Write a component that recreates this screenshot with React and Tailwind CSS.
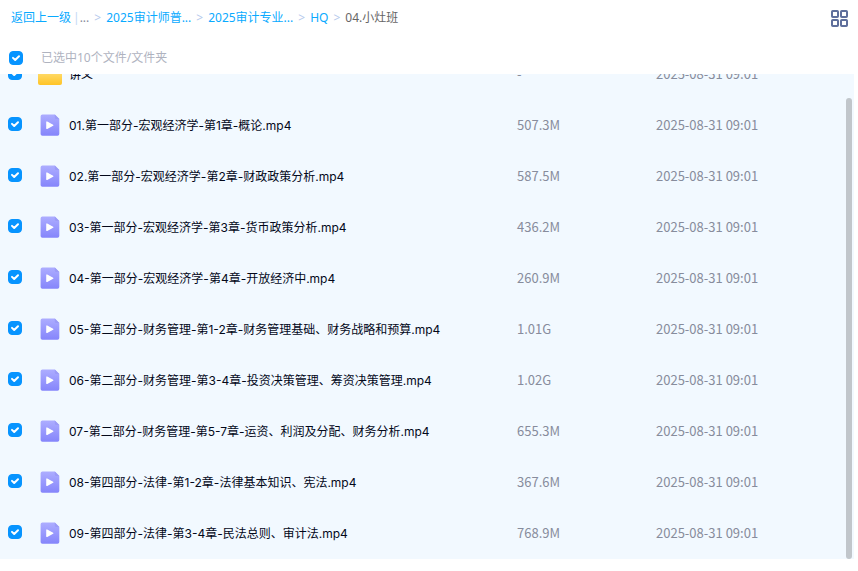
import React from 'react';

const crumbs = ['2025审计师普...', '2025审计专业...', 'HQ'];

const files = [
  { type: 'folder', name: '讲义', size: '-', date: '2025-08-31 09:01' },
  { type: 'video', name: '01.第一部分-宏观经济学-第1章-概论.mp4', size: '507.3M', date: '2025-08-31 09:01' },
  { type: 'video', name: '02.第一部分-宏观经济学-第2章-财政政策分析.mp4', size: '587.5M', date: '2025-08-31 09:01' },
  { type: 'video', name: '03-第一部分-宏观经济学-第3章-货币政策分析.mp4', size: '436.2M', date: '2025-08-31 09:01' },
  { type: 'video', name: '04-第一部分-宏观经济学-第4章-开放经济中.mp4', size: '260.9M', date: '2025-08-31 09:01' },
  { type: 'video', name: '05-第二部分-财务管理-第1-2章-财务管理基础、财务战略和预算.mp4', size: '1.01G', date: '2025-08-31 09:01' },
  { type: 'video', name: '06-第二部分-财务管理-第3-4章-投资决策管理、筹资决策管理.mp4', size: '1.02G', date: '2025-08-31 09:01' },
  { type: 'video', name: '07-第二部分-财务管理-第5-7章-运资、利润及分配、财务分析.mp4', size: '655.3M', date: '2025-08-31 09:01' },
  { type: 'video', name: '08-第四部分-法律-第1-2章-法律基本知识、宪法.mp4', size: '367.6M', date: '2025-08-31 09:01' },
  { type: 'video', name: '09-第四部分-法律-第3-4章-民法总则、审计法.mp4', size: '768.9M', date: '2025-08-31 09:01' },
];

const Checkbox = ({ id }) => (
  <span className="relative block size-3.5 shrink-0">
    <input
      id={id}
      type="checkbox"
      defaultChecked
      className="peer block size-3.5 appearance-none rounded-[4px] border border-[#c4d8f6] bg-white checked:border-[#0794ff] checked:bg-[#0794ff]"
    />
    <svg
      viewBox="0 0 14 14"
      className="pointer-events-none absolute inset-0 hidden size-3.5 peer-checked:block"
      fill="none"
      stroke="#fff"
      strokeWidth="2"
      strokeLinecap="round"
      strokeLinejoin="round"
    >
      <path d="M4 6.9l2.2 2.1L10 5.3" />
    </svg>
  </span>
);

const VideoIcon = () => (
  <svg width="24" height="24" viewBox="0 0 24 24" className="block">
    <defs>
      <linearGradient id="video-fill" x1="0" y1="0" x2="0" y2="1">
        <stop offset="0" stopColor="#adadff" />
        <stop offset="1" stopColor="#8585fb" />
      </linearGradient>
    </defs>
    <path
      d="M4.400 1.500h12.400l4.500 4.500v15a1.800 1.800 0 0 1-1.800 1.800H4.400a1.800 1.800 0 0 1-1.800-1.800V3.300a1.800 1.800 0 0 1 1.800-1.800z"
      fill="url(#video-fill)"
    />
    <path d="M16.800 1.500l4.500 4.500h-3a1.500 1.500 0 0 1-1.500-1.500z" fill="#9c9cf6" />
    <path d="M8.900 9v6.400l5.900-3.200z" fill="#fff" stroke="#fff" strokeWidth="1.300" strokeLinejoin="round" />
  </svg>
);

const FolderIcon = () => (
  <svg width="24" height="24" viewBox="0 0 24 24" className="block">
    <defs>
      <linearGradient id="folder-fill" x1="0" y1="0" x2="0" y2="1">
        <stop offset="0" stopColor="#ffe07a" />
        <stop offset="1" stopColor="#ffc427" />
      </linearGradient>
    </defs>
    <path d="M0 4a2 2 0 0 1 2-2h7l3 3h10a2 2 0 0 1 2 2v10H0z" fill="#ffb91f" />
    <path d="M0 8h24v13a2 2 0 0 1-2 2H2a2 2 0 0 1-2-2z" fill="url(#folder-fill)" />
  </svg>
);

const GridIcon = () => (
  <svg width="17" height="17" viewBox="0 0 17 17" fill="none" stroke="#5f6f9c" strokeWidth="2">
    <rect x="1" y="1" width="6" height="6" rx="0.800" />
    <rect x="10" y="1" width="6" height="6" rx="0.800" />
    <rect x="1" y="10" width="6" height="6" rx="0.800" />
    <rect x="10" y="10" width="6" height="6" rx="0.800" />
  </svg>
);

const Breadcrumb = () => (
  <nav className="flex min-w-0 items-center whitespace-nowrap text-[#09aaff]">
    <a href="#back">返回上一级</a>
    <span className="ml-0.5 text-[#c4d8f6]">|</span>
    <span className="text-[#878c9c]">...</span>
    {crumbs.map((crumb) => (
      <React.Fragment key={crumb}>
        <span className="mx-[5px] text-[#b5c9ec]">&gt;</span>
        <a href="#folder">{crumb}</a>
      </React.Fragment>
    ))}
    <span className="mx-[5px] text-[#b5c9ec]">&gt;</span>
    <span className="text-[#666]">04.小灶班</span>
  </nav>
);

const FileRow = ({ file, index }) => (
  <tr className="h-[51px] bg-[#f2f9ff]">
    <td className="pb-1 pl-2">
      <Checkbox id={`file-${index}`} />
    </td>
    <td className="pb-0.5">{file.type === 'folder' ? <FolderIcon /> : <VideoIcon />}</td>
    <td className="truncate pl-[7px] font-['Inter','Noto_Sans_CJK_SC',sans-serif] text-[#03081a]">
      <label htmlFor={`file-${index}`}>{file.name}</label>
    </td>
    <td className="pb-0.5 font-['Noto_Sans_CJK_SC',sans-serif] text-[13px] text-[#878c9c]">{file.size}</td>
    <td className="pb-0.5 font-['Noto_Sans_CJK_SC',sans-serif] text-[13px] text-[#878c9c]">{file.date}</td>
  </tr>
);

const App = () => {
  return (
    <main className="flex h-screen flex-col bg-white pr-1 pb-3 font-['Noto_Sans','Noto_Sans_CJK_SC',sans-serif] text-xs">
      <header className="flex h-9 shrink-0 items-center justify-between pr-1.5 pl-[11px]">
        <Breadcrumb />
        <button type="button" aria-label="Grid">
          <GridIcon />
        </button>
      </header>

      <div className="flex shrink-0 items-center gap-[18px] pt-3 pr-2 pb-1.5 pl-[9px]">
        <Checkbox id="select-all" />
        <label htmlFor="select-all" className="leading-5 text-[#afb3bf]">
          已选中10个文件/文件夹
        </label>
      </div>

      {/* list is scrolled to the end, so the first row is partly cut off */}
      <section className="relative flex min-h-0 flex-1 flex-col justify-end overflow-hidden bg-[#f2f9ff]">
        <table className="w-full table-fixed border-collapse">
          <colgroup>
            <col className="w-[38px]" />
            <col className="w-6" />
            <col />
            <col className="w-[139px]" />
            <col className="w-[198px]" />
          </colgroup>
          <tbody>
            {files.map((file, index) => (
              <FileRow key={file.name} file={file} index={index} />
            ))}
          </tbody>
        </table>
        <div className="absolute top-6 right-0.5 bottom-0 w-1.5 rounded-full bg-[#c1c6cb]" />
      </section>
    </main>
  );
};

export default App;
